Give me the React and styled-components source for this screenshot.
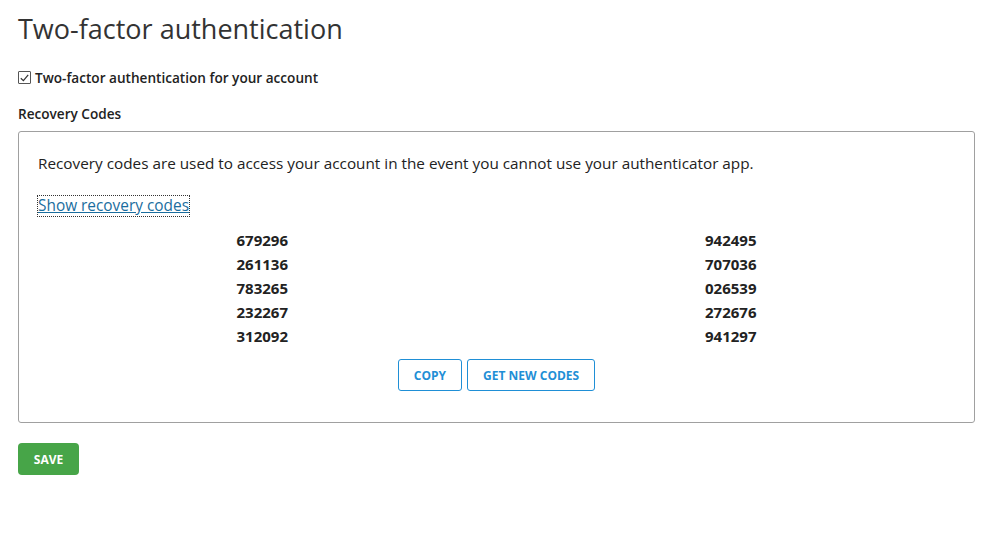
import React from 'react';
import styled, { createGlobalStyle } from 'styled-components';

const GlobalStyle = createGlobalStyle`
    body {
        margin: 0;
        background: #fff;
        color: #222;
        font-family: "Open Sans", "Noto Sans", sans-serif;
    }
`;

const Page = styled.div`
    padding: 10px 14px 0 18px;
`;

const Title = styled.h1`
    margin: 0;
    font-size: 27px;
    font-weight: 400;
    color: #333;
    line-height: 38px;
`;

const CheckRow = styled.label`
    display: flex;
    align-items: center;
    gap: 4px;
    margin-top: 20px;
    font-size: 13.6px;
    font-weight: 600;
    color: #222;
`;

const CheckBox = styled.span`
    display: inline-flex;
    align-items: center;
    justify-content: center;
    width: 11px;
    height: 11px;
    border: 1px solid #555;
    border-radius: 1px;
    background: #fff;
`;

const SectionLabel = styled.div`
    margin-top: 17px;
    font-size: 13.6px;
    font-weight: 600;
    color: #222;
`;

const Box = styled.div`
    margin-top: 8px;
    border: 1px solid #a0a0a0;
    border-radius: 3px;
    padding: 20px 19px 31px 19px;
`;

const Intro = styled.p`
    margin: 0;
    font-size: 15.3px;
    line-height: 22px;
    color: #222;
`;

const ShowLink = styled.a`
    display: inline-block;
    margin-top: 22px;
    font-size: 15.4px;
    line-height: 20px;
    color: #1a6d9e;
    text-decoration: underline;
    outline: 1px dotted #333;
    cursor: pointer;
`;

const Codes = styled.div`
    display: grid;
    grid-template-columns: 1fr 1fr;
    column-gap: 20px;
    margin-top: 12px;
`;

const CodeCol = styled.div`
    display: flex;
    flex-direction: column;
    align-items: center;
`;

const Code = styled.div`
    font-size: 15px;
    font-weight: 700;
    line-height: 24px;
    color: #222;
`;

const Actions = styled.div`
    display: flex;
    justify-content: center;
    gap: 5px;
    margin-top: 11px;
`;

const OutlineButton = styled.button`
    height: 32px;
    padding: 0 15px;
    background: #fff;
    border: 1px solid #1f8fd6;
    border-radius: 3px;
    color: #1f8fd6;
    font-family: "Open Sans", "Noto Sans", sans-serif;
    font-size: 12px;
    font-weight: 700;
    cursor: pointer;
`;

const SaveButton = styled.button`
    margin-top: 20px;
    height: 32px;
    width: 61px;
    background: #47a548;
    border: none;
    border-radius: 4px;
    color: #fff;
    font-family: "Open Sans", "Noto Sans", sans-serif;
    font-size: 12px;
    font-weight: 700;
`;

const left = ['679296', '261136', '783265', '232267', '312092'];
const right = ['942495', '707036', '026539', '272676', '941297'];

const App = () => {
    return (
        <>
            <GlobalStyle />
            <Page>
                <Title>Two-factor authentication</Title>
                <CheckRow>
                    <CheckBox>
                        <svg width="9" height="8" viewBox="0 0 9 8">
                            <path d="M0.8 4.2 L3.4 6.6 L8.2 0.9" fill="none" stroke="#333" strokeWidth="1.2" />
                        </svg>
                    </CheckBox>
                    Two-factor authentication for your account
                </CheckRow>
                <SectionLabel>Recovery Codes</SectionLabel>
                <Box>
                    <Intro>Recovery codes are used to access your account in the event you cannot use your authenticator app.</Intro>
                    <ShowLink>Show recovery codes</ShowLink>
                    <Codes>
                        <CodeCol>{left.map(c => <Code key={c}>{c}</Code>)}</CodeCol>
                        <CodeCol>{right.map(c => <Code key={c}>{c}</Code>)}</CodeCol>
                    </Codes>
                    <Actions>
                        <OutlineButton>COPY</OutlineButton>
                        <OutlineButton>GET NEW CODES</OutlineButton>
                    </Actions>
                </Box>
                <SaveButton>SAVE</SaveButton>
            </Page>
        </>
    );
};

export default App;
